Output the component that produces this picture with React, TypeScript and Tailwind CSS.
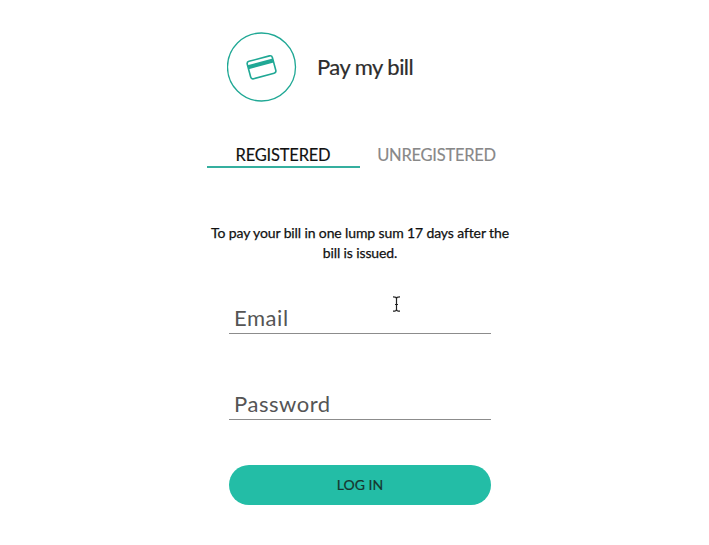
function CardIcon() {
  return (
    <svg width="70" height="70" viewBox="0 0 70 70" fill="none" stroke="#20a895" strokeWidth="1.3" className="shrink-0">
      <circle cx="34.5" cy="35" r="34" />
      <g transform="rotate(-15 34.5 35.2)">
        <rect x="21.5" y="26.3" width="26" height="18" rx="2.4" strokeWidth="1.6" />
        <path d="M21.5 29.8h26v4h-26z" fill="#20a895" stroke="none" />
      </g>
    </svg>
  );
}

function TextCursor() {
  return (
    <svg width="9" height="16" viewBox="0 0 9 16" fill="none" stroke="#222" strokeWidth="1.2" className="absolute left-[392px] top-[296px]">
      <path d="M1 .8c2 0 3.5.5 3.5 1.8C4.5 1.3 6 .8 8 .8M4.5 2.5v11M1 15.2c2 0 3.5-.5 3.5-1.8 0 1.3 1.5 1.8 3.5 1.8M3 8.5h3" />
    </svg>
  );
}

function Field({ label, type }: { label: string; type: string }) {
  return (
    <input
      type={type}
      aria-label={label}
      placeholder={label}
      className="h-[34px] w-[262px] border-b border-[#8c8c8c] bg-transparent pl-[5px] pt-0.5 text-[22px] tracking-[0.55px] text-[#555] outline-none placeholder:text-[#555]"
    />
  );
}

export default function App() {
  return (
    <main className="relative flex h-[545px] w-[709px] flex-col items-center overflow-hidden bg-white pl-[11px] font-['Lato',sans-serif]">
      <header className="mt-8 flex h-[70px] w-[266px] shrink-0 items-center gap-5">
        <CardIcon />
        <h1 className="-mt-0.5 whitespace-nowrap text-[22px] tracking-[-0.55px] text-[#2d2d2d] [-webkit-text-stroke:0.2px]">Pay my bill</h1>
      </header>
      <nav className="mt-[41px] flex h-[25px] w-[307px] shrink-0 text-[16.5px] leading-6 [-webkit-text-stroke:0.15px]">
        <button className="w-[153px] border-b-2 border-[#35af9f] tracking-[-0.2px] text-[#111]">REGISTERED</button>
        <button className="w-[154px] border-b-2 border-transparent tracking-[-0.25px] text-[#888]">UNREGISTERED</button>
      </nav>
      <p className="mt-[55px] h-[41px] w-[310px] shrink-0 text-center text-[14px] leading-5 tracking-[-0.12px] text-[#111] [-webkit-text-stroke:0.25px]">
        To pay your bill in one lump sum 17 days after the
        <br />
        bill is issued.
      </p>
      <form className="mt-9 flex flex-col items-center" onSubmit={(e) => e.preventDefault()}>
        <Field label="Email" type="text" />
        <div className="mt-[52px] flex">
          <Field label="Password" type="password" />
        </div>
        <button className="mt-[45px] h-10 w-[262px] rounded-full bg-[#23bda6] pb-0.5 text-[14px] text-[#17362f] [-webkit-text-stroke:0.2px]">LOG IN</button>
      </form>
      <TextCursor />
    </main>
  );
}
